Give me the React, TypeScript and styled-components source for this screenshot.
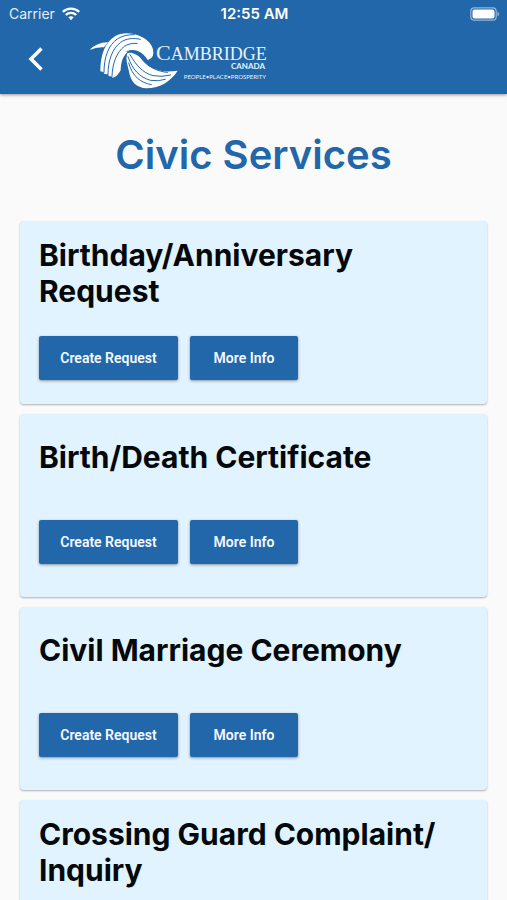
import React from "react";
import styled, { createGlobalStyle } from "styled-components";

const blue = "#2367ab";

const GlobalStyle = createGlobalStyle`
  *, *::before, *::after { box-sizing: border-box; }
  body {
    margin: 0;
    background: #fafafa;
    color: #05080b;
    font-family: Inter, "Liberation Sans", sans-serif;
  }
  html { scrollbar-width: none; }
`;

const Header = styled.header`
  background: ${blue};
  box-shadow: 0 1px 3px rgba(0, 0, 0, 0.4);
  color: #fff;
`;

const StatusBar = styled.div`
  display: grid;
  grid-template-columns: 1fr auto 1fr;
  align-items: center;
  height: 26px;
  padding: 2px 7px 0 9px;
  font-size: 14px;
  line-height: 20px;
`;

const Carrier = styled.span`
  display: flex;
  align-items: center;
  gap: 7px;
  color: #e3edf7;
`;

const Clock = styled.time`
  font-size: 15px;
  font-weight: 600;
`;

const BatteryIcon = styled.svg`
  justify-self: end;
`;

const NavBar = styled.div`
  display: flex;
  align-items: center;
  gap: 30px;
  height: 68px;
  padding: 0 15px 2px;
`;

const BackButton = styled.button`
  display: flex;
  align-items: center;
  justify-content: center;
  width: 40px;
  height: 44px;
  padding: 0;
  border: 0;
  background: none;
  color: inherit;
`;

const Title = styled.h1`
  margin: 0;
  padding: 37px 20px 42px;
  color: ${blue};
  font-size: 40px;
  font-weight: 600;
  line-height: 48px;
  text-align: center;
`;

const ServiceList = styled.main`
  display: flex;
  flex-direction: column;
  gap: 10px;
  padding: 0 20px 10px;
`;

const Card = styled.section`
  display: flex;
  flex-direction: column;
  justify-content: center;
  gap: 27px;
  min-height: 183px;
  padding: 16px 19px 24px;
  border-radius: 4px;
  background: #e1f3fe;
  box-shadow: 0 1px 2px rgba(0, 0, 0, 0.3);
`;

const CardTitle = styled.h2`
  min-height: 54px;
  margin: 0;
  font-size: 30px;
  font-weight: 700;
  line-height: 36px;
`;

const Actions = styled.div`
  display: flex;
  gap: 12px;
`;

const ActionButton = styled.button<{ $wide?: boolean }>`
  width: ${({ $wide }) => ($wide ? 139 : 108)}px;
  height: 44px;
  padding: 0;
  border: 0;
  border-radius: 2px;
  background: ${blue};
  box-shadow: 0 1px 3px rgba(0, 0, 0, 0.4);
  color: #f5faff;
  font: 600 14px/20px Roboto, "Liberation Sans", sans-serif;
`;

const services = [
  "Birthday/Anniversary Request",
  "Birth/Death Certificate",
  "Civil Marriage Ceremony",
  "Crossing Guard Complaint/\u200bInquiry",
];

function WifiIcon() {
  return (
    <svg width="18" height="14" viewBox="0 0 18 14" fill="none" stroke="#fff" strokeWidth="2.3" aria-hidden="true">
      <path d="M.8 4.8C5.3.5 12.7.5 17.2 4.8" />
      <path d="M3.8 8C6.7 5.2 11.3 5.2 14.2 8" />
      <path d="M6.3 10.3Q9 8 11.7 10.3L9 13.2Z" fill="#fff" stroke="none" />
    </svg>
  );
}

function Logo() {
  return (
    <svg width="185" height="66" viewBox="0 0 185 66" role="img" aria-label="Cambridge Canada">
      <g transform="scale(.33333)">
        <path fill="#fff" d="M14 72Q37 48 69 49L57 64Q36 62 14 72Z" />
        <path
          fill="#fff"
          d="M46 136C46 84 62 47 91 30C112 17 144 20 166 31C190 41 206 60 205 82Q204 98 188 102C178 84 157 68 134 73C112 89 108 110 107 133Q96 154 83 155L79 151L72 151L69 145L58 144L56 138Z"
        />
        <path
          fill="#fff"
          d="M127 82C137 77 157 84 169 99C190 128 226 142 278 134C258 165 224 188 182 187C152 184 138 166 133 142C130 121 120 103 127 82Z"
        />
        <g fill="none" stroke={blue} strokeWidth="3" strokeLinecap="round">
          <path d="M57 139C57 92 71 57 97 39C111 30 128 25 148 26" />
          <path d="M69 145C69 101 83 67 107 49C124 37 145 35 166 40" />
          <path d="M81 151C82 112 95 79 118 61C128 54 143 51 157 52" />
          <path d="M126 76C137 73 157 80 171 97C188 121 218 138 248 139" />
          <path d="M135 86C154 118 172 140 204 149Q231 154 257 147" />
          <path d="M129 92C143 133 164 153 196 163Q221 167 241 160" />
          <path d="M131 111C143 152 166 170 199 176" />
        </g>
      </g>
      <g fill="#e8f2fb">
        <text x="71" y="34" fontFamily="Liberation Serif, serif" fontSize="22">
          C<tspan fontSize="18">AMBRIDGE</tspan>
        </text>
        <text x="180" y="43" textAnchor="end" fontFamily="Lato, sans-serif" fontSize="8" fontWeight="700">
          CANADA
        </text>
        <text x="181" y="53" textAnchor="end" fontFamily="Lato, sans-serif" fontSize="6">
          PEOPLE•PLACE•PROSPERITY
        </text>
      </g>
    </svg>
  );
}

export default function App() {
  return (
    <>
      <GlobalStyle />
      <Header>
        <StatusBar>
          <Carrier>
            Carrier
            <WifiIcon />
          </Carrier>
          <Clock>12:55 AM</Clock>
          <BatteryIcon width="30" height="14" viewBox="0 0 30 14" aria-hidden="true">
            <rect x=".8" y=".8" width="25.4" height="12.4" rx="3.5" fill="none" stroke="#94b9dc" strokeWidth="1.2" />
            <rect x="2.5" y="2.5" width="22" height="9" rx="2" fill="#fff" />
            <path d="M27.5 4.5Q31 7 27.5 9.5Z" fill="#94b9dc" />
          </BatteryIcon>
        </StatusBar>
        <NavBar>
          <BackButton aria-label="Back">
            <svg width="20" height="26" viewBox="0 0 20 26" fill="none" stroke="#fff" strokeWidth="3.5" aria-hidden="true">
              <path d="M16.5 2.5L6 13L16.5 23.5" />
            </svg>
          </BackButton>
          <Logo />
        </NavBar>
      </Header>
      <Title>Civic Services</Title>
      <ServiceList>
        {services.map((name) => (
          <Card key={name}>
            <CardTitle>{name}</CardTitle>
            <Actions>
              <ActionButton $wide>Create Request</ActionButton>
              <ActionButton>More Info</ActionButton>
            </Actions>
          </Card>
        ))}
      </ServiceList>
    </>
  );
}
